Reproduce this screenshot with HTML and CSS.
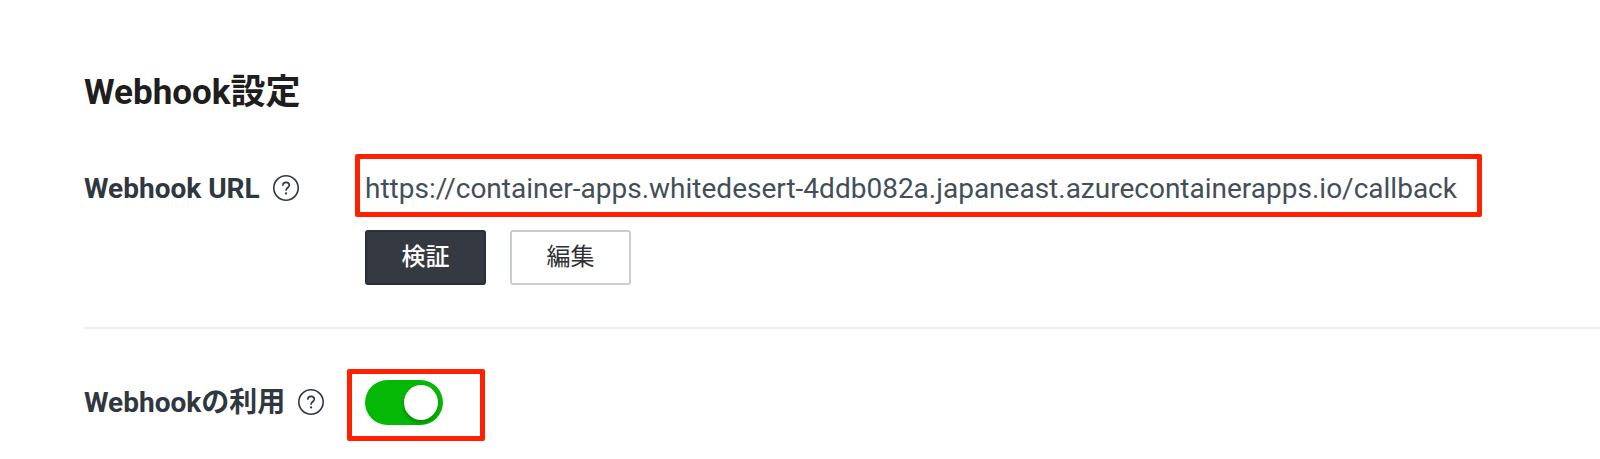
FILE: index.html
```html
<!DOCTYPE html>
<html lang="ja">
<head>
<meta charset="utf-8">
<title>Webhook設定</title>
<link rel="stylesheet" href="styles.css">
</head>
<body>
<main class="settings">
  <h2 class="title">Webhook設定</h2>
  <section class="row row-url">
    <div class="label"><span class="label-text">Webhook URL</span>
      <svg class="help" viewBox="0 0 26 26"><circle cx="13" cy="13" r="12.2"/><path d="M9.8 10.8C9.8 8.7 11.1 7.4 13.1 7.4S16.3 8.6 16.3 10.3C16.3 12.7 13.1 12.8 13.1 15.2V15.7"/><circle class="dot" cx="13.1" cy="18.4" r="1.1"/></svg>
    </div>
    <div class="content">
      <div class="mark mark-url"><span class="url">https://container-apps.whitedesert-4ddb082a.japaneast.azurecontainerapps.io/callback</span></div>
      <div class="buttons">
        <button class="btn btn-dark">検証</button>
        <button class="btn">編集</button>
      </div>
    </div>
  </section>
  <section class="row row-use">
    <div class="label"><span class="label-text">Webhookの利用</span>
      <svg class="help" viewBox="0 0 26 26"><circle cx="13" cy="13" r="12.2"/><path d="M9.8 10.8C9.8 8.7 11.1 7.4 13.1 7.4S16.3 8.6 16.3 10.3C16.3 12.7 13.1 12.8 13.1 15.2V15.7"/><circle class="dot" cx="13.1" cy="18.4" r="1.1"/></svg>
    </div>
    <div class="mark mark-toggle"><div class="toggle"><div class="knob"></div></div></div>
  </section>
</main>
</body>
</html>
```
FILE: styles.css
```css
* { box-sizing: border-box; }
body {
  margin: 0;
  height: 459px;
  overflow: hidden;
  background: #fff;
  color: #2f3840;
  font-family: Roboto, "Noto Sans CJK JP", sans-serif;
}
.settings { padding: 69px 0 0 84px; }
.title {
  margin: 0;
  height: 48px;
  line-height: 48px;
  font-size: 35px;
  font-weight: 700;
  color: #1e1e1e;
  white-space: nowrap;
}
.row { display: flex; align-items: flex-start; }
.row-url {
  height: 212px;
  padding-top: 37px;
  border-bottom: 2px solid #ededee;
}
.row-use { padding-top: 40px; }
.label {
  display: flex;
  align-items: center;
  gap: 13px;
  flex: none;
  white-space: nowrap;
  font-size: 28px;
  font-weight: 700;
}
.row-url .label { width: 271px; height: 67px; }
.row-use .label { width: 263px; height: 66px; }
.label-text { line-height: 40px; padding-top: 2px; }
.help {
  width: 26px;
  height: 26px;
  fill: none;
  stroke: #2f3840;
  stroke-width: 1.6;
}
.help .dot { fill: #2f3840; stroke: none; }
.mark { border: 5px solid #ff2000; border-radius: 2px; }
.mark-url {
  width: 1127px;
  height: 63px;
  padding: 7px 0 0 5px;
  display: flex;
  align-items: center;
}
.url {
  font-size: 28px;
  line-height: 40px;
  color: #434f58;
  white-space: nowrap;
}
.buttons { display: flex; gap: 24px; padding: 13px 0 0 10px; }
.btn {
  width: 121px;
  height: 55px;
  padding: 0 0 6px;
  border: 2px solid #c8cdd3;
  border-radius: 3px;
  background: #fff;
  color: #2f3136;
  font: 400 24px/35px "Noto Sans CJK JP", sans-serif;
}
.btn-dark {
  background: #353a42;
  border-color: #2a2f39;
  color: #fff;
  font-weight: 500;
}
.mark-toggle { width: 138px; height: 72px; padding: 6px 0 0 13px; }
.toggle {
  display: flex;
  justify-content: flex-end;
  width: 78px;
  height: 45px;
  padding: 5px;
  border-radius: 23px;
  background: #06b806;
}
.knob {
  width: 34px;
  height: 35px;
  border-radius: 50%;
  background: #fff;
  box-shadow: 0 3px 4px rgba(0, 0, 0, .25);
}
```
